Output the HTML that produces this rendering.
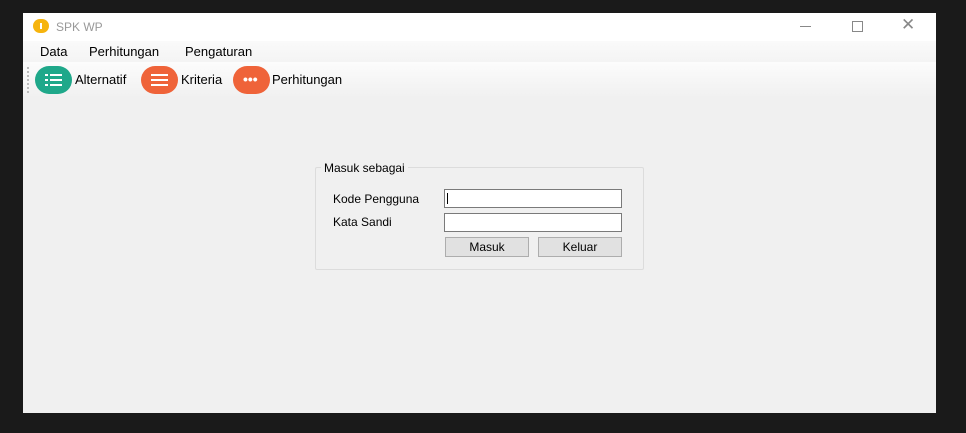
<!DOCTYPE html>
<html><head><style>
body{margin:0;width:966px;height:433px;background:#1a1a1a;position:relative;overflow:hidden;font-family:"Liberation Sans",sans-serif;}
.win{position:absolute;left:23px;top:13px;width:913px;height:400px;background:#f0f0f0;}
.title{position:absolute;left:0;top:0;width:100%;height:28px;background:#fff;}
.t{position:absolute;font-size:12px;color:#000;}
.menu{position:absolute;left:0;top:28px;width:100%;height:21px;background:linear-gradient(#fafafa,#f4f4f4);}
.tool{position:absolute;left:0;top:49px;width:100%;height:36px;background:linear-gradient(#fcfcfc,#f0f0f0);}
.ic{position:absolute;width:37px;height:28px;border-radius:14px;top:4px;}
.box{position:absolute;left:292px;top:154px;width:327px;height:101px;border:1px solid #dcdcdc;border-radius:2px;}
.inp{position:absolute;background:#fff;border:1px solid #7a7a7a;height:17px;}
.btn{position:absolute;background:#e1e1e1;border:1px solid #adadad;height:18px;font-size:12px;text-align:center;line-height:18px;}
</style></head><body>
<div class="win">
 <div class="title">
  <div style="position:absolute;left:10px;top:6px;width:16px;height:14px;border-radius:7px;background:#f6b40e"></div>
  <div style="position:absolute;left:17px;top:10px;width:2px;height:6px;background:#fff"></div>
  <div class="t" style="left:33px;top:7px;color:#999">SPK WP</div>
  <div style="position:absolute;left:777px;top:13px;width:11px;height:1px;background:#888"></div>
  <div style="position:absolute;left:829px;top:8px;width:9px;height:9px;border:1px solid #888"></div>
  <div style="position:absolute;left:878px;top:2px;font-size:17px;color:#888">✕</div>
 </div>
 <div class="menu">
  <div class="t" style="left:17px;top:3px;font-size:13px">Data</div>
  <div class="t" style="left:66px;top:3px;font-size:13px">Perhitungan</div>
  <div class="t" style="left:162px;top:3px;font-size:13px">Pengaturan</div>
 </div>
 <div class="tool">
  <div style="position:absolute;left:4px;top:5px;width:1px;height:26px;border-left:2px dotted #bbb"></div>
  <div class="ic" style="left:12px;background:#1fa88a">
   <div style="position:absolute;left:10px;top:8px;width:3px;height:12px;background:repeating-linear-gradient(#fff 0 2px,transparent 2px 5px)"></div>
   <div style="position:absolute;left:15px;top:8px;width:12px;height:12px;background:repeating-linear-gradient(#fff 0 2px,transparent 2px 5px)"></div>
  </div>
  <div class="t" style="left:52px;top:10px;font-size:13px">Alternatif</div>
  <div class="ic" style="left:118px;background:#ef6339">
   <div style="position:absolute;left:10px;top:8px;width:17px;height:12px;background:repeating-linear-gradient(#fff 0 2px,transparent 2px 5px)"></div>
  </div>
  <div class="t" style="left:158px;top:10px;font-size:13px">Kriteria</div>
  <div class="ic" style="left:210px;background:#ef6339">
   <div style="position:absolute;left:10px;top:9px;font-size:14px;color:#fff;font-weight:bold;line-height:8px">•••</div>
  </div>
  <div class="t" style="left:249px;top:10px;font-size:13px">Perhitungan</div>
 </div>
 <div class="box"></div>
 <div style="position:absolute;left:298px;top:148px;background:#f0f0f0;padding:0 3px;font-size:12px">Masuk sebagai</div>
 <div class="t" style="left:310px;top:179px">Kode Pengguna</div>
 <div class="t" style="left:310px;top:202px">Kata Sandi</div>
 <div class="inp" style="left:421px;top:176px;width:176px"><div style="position:absolute;left:2px;top:3px;width:1px;height:11px;background:#000"></div></div>
 <div class="inp" style="left:421px;top:200px;width:176px"></div>
 <div class="btn" style="left:422px;top:224px;width:82px">Masuk</div>
 <div class="btn" style="left:515px;top:224px;width:82px">Keluar</div>
</div>
</body></html>
